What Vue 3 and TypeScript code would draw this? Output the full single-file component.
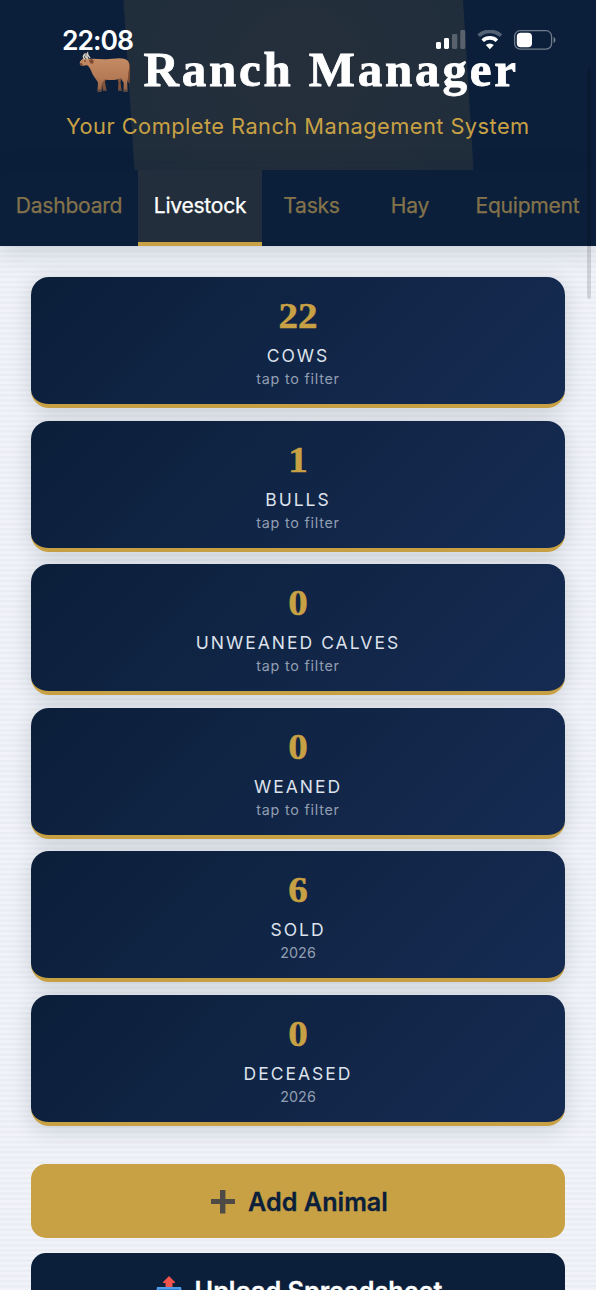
<script setup lang="ts">
interface Stat {
  value: number
  label: string
  note: string
}

const tabs: string[] = ['Dashboard', 'Livestock', 'Tasks', 'Hay', 'Equipment']
const activeTab = 'Livestock'

const stats: Stat[] = [
  { value: 22, label: 'Cows', note: 'tap to filter' },
  { value: 1, label: 'Bulls', note: 'tap to filter' },
  { value: 0, label: 'Unweaned Calves', note: 'tap to filter' },
  { value: 0, label: 'Weaned', note: 'tap to filter' },
  { value: 6, label: 'Sold', note: '2026' },
  { value: 0, label: 'Deceased', note: '2026' },
]
</script>

<template>
  <div class="screen">
    <div class="status">
      <span class="clock">22:08</span>
      <svg class="indicators" viewBox="0 0 122 22" width="122" height="22">
        <rect x="0" y="12" width="5" height="7" rx="1.4" fill="#fff" />
        <rect x="8" y="8" width="5" height="11" rx="1.4" fill="#fff" />
        <rect x="16" y="4" width="5.3" height="15" rx="1.4" fill="#fff" opacity=".25" />
        <rect x="24.3" y="0" width="5" height="19" rx="1.4" fill="#fff" opacity=".25" />
        <g fill="none" stroke="#fff">
          <path d="M42.6 5.7a16.7 16.7 0 0 1 22.4 0" stroke-width="3.7" opacity=".3" />
          <path d="M46.7 10.7a10.4 10.4 0 0 1 14.2 0" stroke-width="3.6" />
        </g>
        <path d="M49.8 15.1a5.7 5.7 0 0 1 8 0L53.8 19.3z" fill="#fff" />
        <rect x="78.6" y="0.7" width="37" height="18.5" rx="5.6" fill="none" stroke="#fff" stroke-width="1.3" opacity=".42" />
        <rect x="80.8" y="2.7" width="15.2" height="14.5" rx="4" fill="#fff" />
        <path d="M117.6 7c2.4.7 2.4 5.3 0 6z" fill="#fff" opacity=".45" />
      </svg>
    </div>

    <header class="header">
      <div class="glow"></div>
      <h1 class="title">
        <svg class="cow" viewBox="0 0 54 42" width="54" height="42">
          <defs>
            <linearGradient id="hide" x1="0" y1="0" x2="0" y2="1">
              <stop offset="0" stop-color="#c48b64" />
              <stop offset=".6" stop-color="#b47a55" />
              <stop offset="1" stop-color="#966245" />
            </linearGradient>
          </defs>
          <path d="M24 25h5l-2 6 1.500 9H25l-1-7zM39 25h5l-1.500 6 1 9H40l.5-8z" fill="#84543a" />
          <path d="M49 9c4 3 3 11 3 17l-.5 7-2-3z" fill="#7c4b31" />
          <path d="M10 8c6-1 12 .5 18 .3S41 6.500 47 8c4 1.500 5 6 4 10-.7 3-1 6-1 9l-.8 5 .3 8h-4l.2-8-3-5c-5 2.500-11 2.500-16 1.500L24 32l-.5 8h-4l.5-8.500c-2-4-5.500-7-7-12-2-4-3-6-6-5-3 1-6 0-5-4l3-3z" fill="url(#hide)" />
          <path d="M7 8C4.500 7 5 4 7 3c-.5 2 .5 3.500 2 4.500M10 8C8.500 6 8.500 3 9.500 2c0 2.500 1.500 4 2.500 5" fill="none" stroke="#d9cfc2" stroke-width="1.3" />
          <path d="M11 9c4-2 5 0 4.500 3-2 2-4 0-4.500-3z" fill="#7d4a30" />
          <path d="M2 12c2-.5 3 .8 3 2.500-2 .8-4 0-3-2.500z" fill="#7b5140" />
          <circle cx="7" cy="10" r=".7" fill="#2d1a14" />
          <path d="M19.500 38.500h4V41h-4zM25 38h3.500v2H25zM45.500 38.500h4V41h-4zM40 38h3.500v2H40z" fill="#5a4a43" />
        </svg>
        <span class="title-text">Ranch Manager</span>
      </h1>
      <p class="tagline">Your Complete Ranch Management System</p>
    </header>

    <nav class="tabs">
      <button v-for="tab in tabs" :key="tab" class="tab" :class="[{ active: tab === activeTab }, tab.toLowerCase()]">
        {{ tab }}
      </button>
    </nav>

    <main class="content">
      <section class="stats">
        <article v-for="stat in stats" :key="stat.label" class="card">
          <div class="value">{{ stat.value }}</div>
          <div class="label">{{ stat.label }}</div>
          <div class="note" :class="{ year: stat.note === '2026' }">{{ stat.note }}</div>
        </article>
      </section>
      <div class="actions">
        <button class="action gold">
          <svg viewBox="0 0 24 24" width="24" height="24"><path d="M9 0h5.400v9H24v5h-9.600v9.500H9V14H0V9h9z" fill="#4e4a46" /></svg>
          <span>Add Animal</span>
        </button>
        <button class="action navy">
          <svg viewBox="0 0 28 30" width="28" height="30">
            <path d="M2 11h24l2 15H0z" fill="#4f9de9" />
            <path d="M4 13h20l1 9H3z" fill="#317bcb" />
            <path d="M0 22h28v8H0z" fill="#4995df" />
            <path d="M14 0l6 6v1h-2.500v4h-7V7H8V6z" fill="#f1534d" />
          </svg>
          <span>Upload Spreadsheet</span>
        </button>
      </div>
    </main>
    <div class="scrollbar"></div>
  </div>
</template>

<style>
body {
  margin: 0;
  overflow: hidden;
}
</style>

<style scoped>
.screen {
  position: relative;
  width: 596px;
  height: 1290px;
  overflow: hidden;
  font-family: Inter, 'Liberation Sans', sans-serif;
  background: repeating-linear-gradient(0deg, #f1f3f8 0 2px, #eaedf3 3px 4.6px, #f1f3f8 5.15px);
}
.status {
  position: absolute;
  z-index: 3;
  inset: 0 0 auto;
  height: 60px;
}
.clock {
  position: absolute;
  left: 62px;
  top: 24px;
  font-size: 26.5px;
  line-height: 32px;
  font-weight: 600;
  letter-spacing: -1px;
  color: #fff;
}
.indicators {
  position: absolute;
  left: 436px;
  top: 30px;
}
.header {
  position: relative;
  height: 170px;
  box-sizing: border-box;
  padding-top: 42px;
  overflow: hidden;
  background: #0b1f3a;
}
.glow {
  position: absolute;
  inset: 0;
  clip-path: polygon(123.5px 0, 463px 0, 473.5px 170px, 134.5px 170px);
  background: radial-gradient(circle at 300px 70px, #252f3b 0, #222e3b 120px, #1e2c3b 250px);
}
.title {
  position: relative;
  display: flex;
  margin: 0;
  padding-left: 78px;
  height: 56px;
  font-family: 'Liberation Serif', serif;
  font-size: 49px;
  line-height: 56px;
  font-weight: 700;
  color: #fff;
}
.cow {
  margin: 9px 11.5px 0 0;
  flex: none;
}
.title-text {
  white-space: nowrap;
  letter-spacing: 2.8px;
  -webkit-text-stroke: 0.8px #fff;
}
.tagline {
  position: relative;
  margin: 14px 0 0 66px;
  font-size: 21.8px;
  line-height: 28px;
  letter-spacing: 0.46px;
  color: #c8a145;
  white-space: nowrap;
}
.tabs {
  position: relative;
  z-index: 2;
  display: flex;
  height: 76px;
  background: #0b1f3a;
  box-shadow: 0 5px 24px rgba(11, 31, 58, 0.17);
}
.tab {
  box-sizing: border-box;
  flex: none;
  padding: 0 0 1px;
  border: 0;
  border-bottom: 4px solid transparent;
  background: none;
  font: 400 21.1px/1 Inter, sans-serif;
  letter-spacing: -0.26px;
  -webkit-text-stroke: 0.25px currentColor;
  color: #84734a;
}
.dashboard { width: 138px; }
.livestock { width: 124px; }
.tasks { width: 99px; }
.hay { width: 98px; }
.equipment { width: 137px; }
.tab.active {
  color: #fff;
  background: #222e3b;
  border-bottom-color: #c8a145;
}
.content {
  padding: 31px 31px 0;
}
.stats {
  display: grid;
  gap: 12.6px;
}
.card {
  box-sizing: border-box;
  height: 131px;
  padding-top: 17px;
  border-radius: 18px;
  border-bottom: 4px solid #c8a145;
  background: linear-gradient(135deg, #0b1f3a, #162b52);
  box-shadow: 0 4px 22px rgba(11, 31, 58, 0.16);
  text-align: center;
}
.value {
  height: 46px;
  font: 700 35.5px/45px 'Liberation Serif', serif;
  -webkit-text-stroke: 0.5px #c8a145;
  transform: scaleX(1.1);
  color: #c8a145;
}
.label {
  height: 32px;
  font-size: 17.5px;
  line-height: 32.4px;
  letter-spacing: 2px;
  text-transform: uppercase;
  color: #dde2ec;
}
.note {
  font-size: 14.3px;
  line-height: 14px;
  letter-spacing: 0.78px;
  color: #929eb1;
}
.note.year {
  letter-spacing: 0.1px;
}
.actions {
  display: grid;
  gap: 15px;
  margin-top: 38.5px;
}
.action {
  display: flex;
  align-items: center;
  justify-content: center;
  gap: 13px;
  height: 74px;
  padding: 0;
  border: 0;
  border-radius: 15px;
  font: 600 25.2px/30px Inter, sans-serif;
  -webkit-text-stroke: 0.3px currentColor;
  color: #0b1f3a;
}
.gold {
  padding: 1px 0 0 3px;
  background: #c8a145;
}
.navy {
  gap: 12px;
  padding: 1px 0 0 1px;
  background: #0b1f3a;
  color: #fff;
}
.scrollbar {
  position: absolute;
  z-index: 4;
  left: 587px;
  top: 68px;
  width: 4px;
  height: 231px;
  border-radius: 2px;
  background: rgba(0, 0, 0, 0.13);
}
</style>
